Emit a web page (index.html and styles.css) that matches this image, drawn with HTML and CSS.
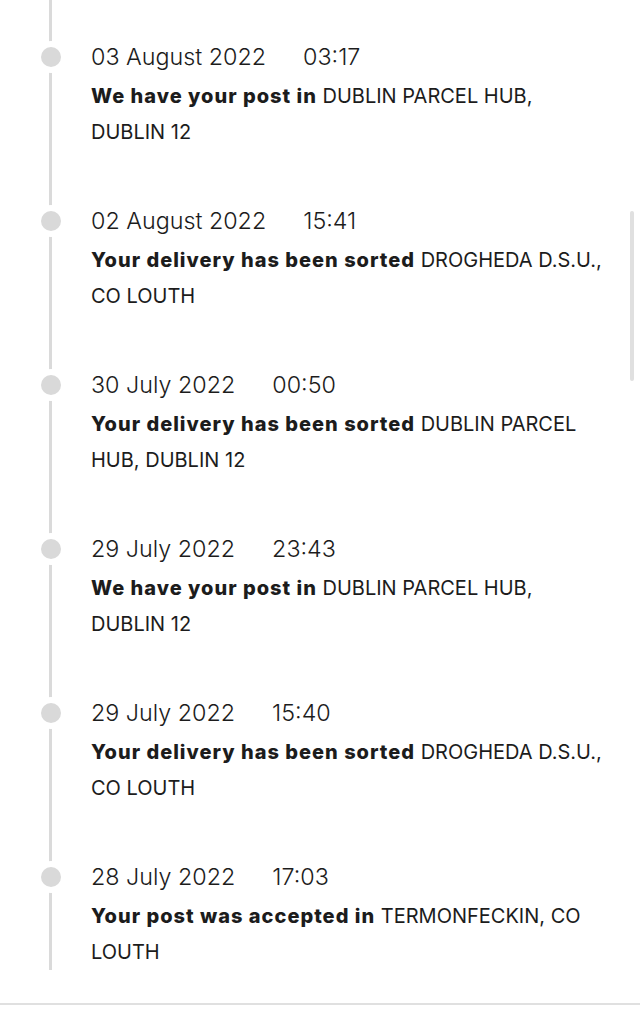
FILE: index.html
```html
<!DOCTYPE html>
<html lang="en">
<head>
	<meta charset="UTF-8">
	<meta name="viewport" content="width=device-width, initial-scale=1.0">
	<title>Track your item</title>
	<link rel="stylesheet" href="styles.css">
</head>
<body>
	<main class="tracking">
		<ol class="timeline">
			<li class="event">
				<span class="dot"></span>
				<p class="stamp"><span class="date">03 August 2022</span><span class="time">03:17</span></p>
				<p class="status"><strong>We have your post in</strong> DUBLIN PARCEL HUB, DUBLIN&nbsp;12</p>
			</li>
			<li class="event">
				<span class="dot"></span>
				<p class="stamp"><span class="date">02 August 2022</span><span class="time">15:41</span></p>
				<p class="status"><strong>Your delivery has been sorted</strong> DROGHEDA D.S.U., CO&nbsp;LOUTH</p>
			</li>
			<li class="event">
				<span class="dot"></span>
				<p class="stamp"><span class="date">30 July 2022</span><span class="time">00:50</span></p>
				<p class="status"><strong>Your delivery has been sorted</strong> DUBLIN PARCEL HUB, DUBLIN&nbsp;12</p>
			</li>
			<li class="event">
				<span class="dot"></span>
				<p class="stamp"><span class="date">29 July 2022</span><span class="time">23:43</span></p>
				<p class="status"><strong>We have your post in</strong> DUBLIN PARCEL HUB, DUBLIN&nbsp;12</p>
			</li>
			<li class="event">
				<span class="dot"></span>
				<p class="stamp"><span class="date">29 July 2022</span><span class="time">15:40</span></p>
				<p class="status"><strong>Your delivery has been sorted</strong> DROGHEDA D.S.U., CO&nbsp;LOUTH</p>
			</li>
			<li class="event">
				<span class="dot"></span>
				<p class="stamp"><span class="date">28 July 2022</span><span class="time">17:03</span></p>
				<p class="status"><strong>Your post was accepted in</strong> TERMONFECKIN, CO LOUTH</p>
			</li>
		</ol>
		<hr class="divider">
	</main>
	<div class="scrollbar"></div>
</body>
</html>
```

FILE: styles.css
```css
body {
	font-family: Inter, "Open Sans", sans-serif;
	color: #1c1c1c;
	background: #fff;
	margin: 0;
}
.timeline {
	list-style: none;
	margin: 0 0 0 49px;
	padding: 37px 28px 0 0;
	border-left: 3px solid #dadada;
	display: flex;
	flex-direction: column;
	gap: 51px;
}
.event {
	position: relative;
	padding-left: 39px;
}
.dot {
	position: absolute;
	left: -11.5px;
	top: 10px;
	width: 20px;
	height: 20px;
	border-radius: 50%;
	background: #d9d9d9;
	box-shadow: 0 0 0 6px #fff; /* white gap in the line */
}
.stamp {
	margin: 0;
	font-size: 23.3px;
	font-weight: 300;
	line-height: 40px;
}
.time {
	margin-left: 37px;
}
.status {
	margin: 1px 0 0;
	font-size: 20px;
	line-height: 36px;
}
.status strong {
	font-weight: 800;
	letter-spacing: 1px;
}
.divider {
	margin: 33px 0 0;
	border: 0;
	border-top: 2px solid #e0e0e0;
}
.scrollbar {
	position: absolute;
	top: 211px;
	right: 6px;
	width: 4px;
	height: 170px;
	border-radius: 2px;
	background: #e0e0e0;
}
```
